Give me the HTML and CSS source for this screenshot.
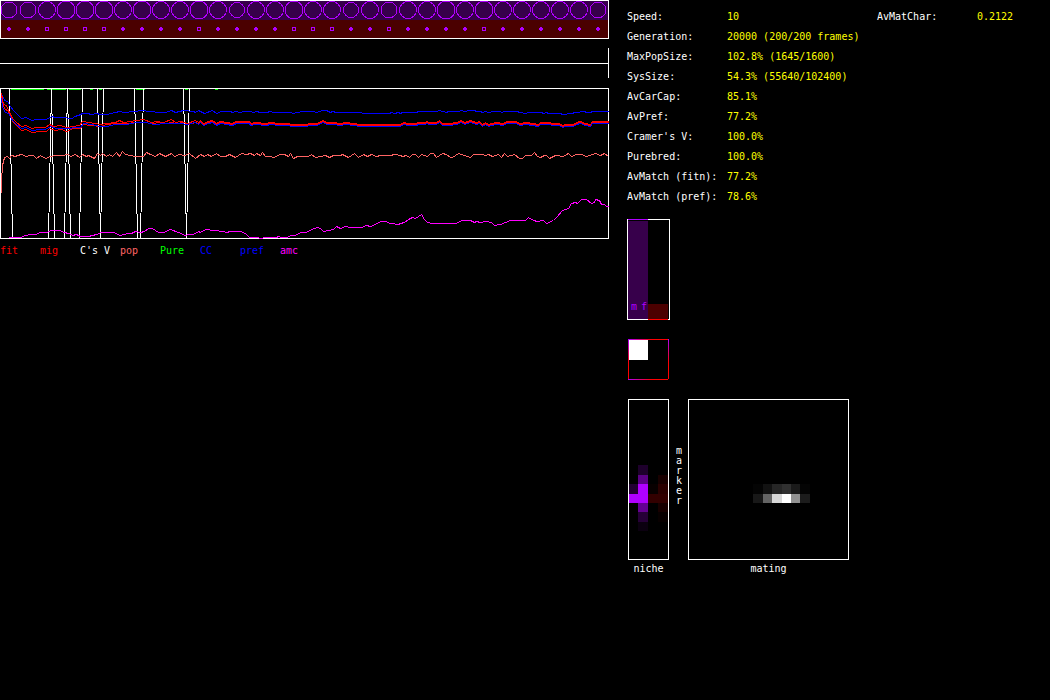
FILE: index.html
```
<!DOCTYPE html>
<html lang="en">
<head>
<meta charset="utf-8">
<title>Population simulation</title>
<link rel="stylesheet" href="styles.css">
</head>
<body>
<main class="app">
  <section class="world">
    <svg class="plot" id="habitat" viewBox="0 0 609 39" role="img" aria-label="Habitat cells">
      <rect class="niche-a" x="1" y="1" width="607" height="19"/>
      <rect class="niche-b" x="1" y="20" width="607" height="18"/>
      <g id="cells"></g>
      <rect class="frame" x="0.5" y="0.5" width="608" height="38"/>
    </svg>
    <svg class="plot plot-gap" viewBox="0 0 609 30" role="img" aria-label="Migration">
      <path class="frame" d="M0 15.5H608M608.5 0V30"/>
    </svg>
    <svg class="plot plot-gap" viewBox="0 0 609 151" role="img" aria-label="History of statistics">
      <rect class="frame" x="0.5" y="0.5" width="608" height="150"/>
      <path class="line pure" d="M11 1.5H44M47 1.5H66M69 1.5H81M90 1.5H93M99 1.5H102M136 1.5H145M185 1.5H188M215 1.5H218"/>
      <path class="line cramer" d="M9.5 0.5L12.5 150.5M48.5 150.5L51.5 0.5L54.5 150.5M64.5 150.5L67.5 0.5L70.5 150.5M79.5 150.5L82.5 0.5M97.5 0.5L100.5 150.5L103.5 0.5M134.5 0.5L137.5 150.5M140.5 150.5L143.5 0.5M183.5 0.5L186.5 150.5L189.5 0.5"/>
      <g id="history"></g>
    </svg>
    <ul class="legend">
      <li class="c-fit">fit</li><li class="c-fit">mig</li><li class="c-cramer">C's V</li><li class="c-pop">pop</li><li class="c-pure">Pure</li><li class="c-cap">CC</li><li class="c-cap">pref</li><li class="c-amc">amc</li>
    </ul>
  </section>
  <section class="side">
    <div class="stats">
      <dl class="stat-list">
        <dt>Speed:</dt><dd>10</dd>
        <dt>Generation:</dt><dd>20000 (200/200 frames)</dd>
        <dt>MaxPopSize:</dt><dd>102.8% (1645/1600)</dd>
        <dt>SysSize:</dt><dd>54.3% (55640/102400)</dd>
        <dt>AvCarCap:</dt><dd>85.1%</dd>
        <dt>AvPref:</dt><dd>77.2%</dd>
        <dt>Cramer's V:</dt><dd>100.0%</dd>
        <dt>Purebred:</dt><dd>100.0%</dd>
        <dt>AvMatch (fitn):</dt><dd>77.2%</dd>
        <dt>AvMatch (pref):</dt><dd>78.6%</dd>
      </dl>
      <dl class="stat-list">
        <dt>AvMatChar:</dt><dd>0.2122</dd>
      </dl>
    </div>
    <svg class="bars" width="43" height="101" viewBox="0 0 43 101" role="img" aria-label="Niche occupancy">
      <rect class="frame" x="0.5" y="0.5" width="42" height="100"/>
      <rect class="niche-a" x="1" y="2" width="20" height="98"/>
      <rect class="niche-b" x="21" y="85" width="20" height="15"/>
      <path class="line purple" d="M1 0.5H21"/>
      <path class="line fit" d="M21 100.5H41"/>
      <text class="bar-label" x="4" y="91">m</text>
      <text class="bar-label" x="14" y="91">f</text>
    </svg>
    <svg class="matrix" width="41" height="41" viewBox="0 0 41 41" role="img" aria-label="Niche association">
      <defs>
        <linearGradient id="fade-x"><stop offset="0" stop-color="#b000ff"/><stop offset="0.6" stop-color="#ff0000"/></linearGradient>
        <linearGradient id="fade-y" x1="0" y1="0" x2="0" y2="1"><stop offset="0" stop-color="#b000ff"/><stop offset="0.6" stop-color="#ff0000"/></linearGradient>
      </defs>
      <rect fill="url(#fade-x)" x="0" y="0" width="41" height="1"/>
      <rect fill="url(#fade-y)" x="0" y="0" width="1" height="41"/>
      <rect fill="url(#fade-x)" x="0" y="40" width="40" height="1"/>
      <rect fill="url(#fade-y)" x="40" y="0" width="1" height="40"/>
      <rect fill="#fff" x="1" y="1" width="19" height="20"/>
    </svg>
    <div class="maps">
      <figure>
        <svg width="41" height="161" viewBox="0 0 41 161" role="img" aria-label="Niche by marker">
          <g id="niche-map"></g>
          <rect class="frame" x="0.5" y="0.5" width="40" height="160"/>
        </svg>
        <figcaption>niche</figcaption>
      </figure>
      <p class="axis">marker</p>
      <figure>
        <svg width="161" height="161" viewBox="0 0 161 161" role="img" aria-label="Mating by marker">
          <g id="mating-map"></g>
          <rect class="frame" x="0.5" y="0.5" width="160" height="160"/>
        </svg>
        <figcaption>mating</figcaption>
      </figure>
    </div>
  </section>
</main>
<script src="app.js"></script>
</body>
</html>
```
FILE: styles.css
```
* { box-sizing: border-box; }
body {
  margin: 0;
  background: #000;
  color: #fff;
  font: 10px/20px "DejaVu Sans Mono", "Liberation Mono", monospace;
}
.app {
  display: grid;
  grid-template-columns: 609fr 441fr;
  min-height: 100vh;
}
svg { display: block; shape-rendering: crispEdges; }
dl, dd, ul, figure, p { margin: 0; padding: 0; }
.plot { width: 100%; height: auto; }
.plot-gap { margin-top: 10px; }
.plot:first-child { margin-bottom: 9px; }
.plot:first-child + .plot-gap { margin-top: 0; }
.frame { fill: none; stroke: #fff; }
.niche-a { fill: #37004b; }
.niche-b { fill: #4b0000; }
.cell { fill: none; stroke: #b000ff; }
.mark { fill: #b000ff; }
.line { fill: none; stroke-width: 1; }
.purple { stroke: #b000ff; }
.fit { stroke: #f00; }
.pure { stroke: #0f0; }
.cramer { stroke: #fff; }
.pop { stroke: #ff6464; }
.cap { stroke: #00f; }
.amc { stroke: #f0f; }
.legend {
  display: flex;
  margin-top: 2px;
  list-style: none;
}
.legend li { width: 40px; white-space: nowrap; }
.c-fit { color: #f00; }
.c-cramer { color: #fff; }
.c-pop { color: #ff6464; }
.c-pure { color: #0f0; }
.c-cap { color: #00f; }
.c-amc { color: #f0f; }
.side { padding: 7px 0 0 18px; }
.stats { display: flex; }
.stat-list {
  display: grid;
  grid-template-columns: 100px 150px;
  align-content: start;
  white-space: nowrap;
}
.stat-list:last-child { grid-template-columns: 100px auto; }
.stat-list dd { color: #ff0; }
.bars { margin-top: 12px; }
.bar-label { fill: #b000ff; font-size: 10px; }
.matrix { margin: 19px 0 0 1px; }
.maps {
  display: flex;
  margin: 19px 0 0 1px;
}
.maps figcaption { line-height: 18px; text-align: center; }
/* One letter per line, reading downwards. */
.axis {
  width: 19px;
  padding: 47px 6px 0 7px;
  line-height: 10px;
  word-break: break-all;
}
```
FILE: app.js
```
const NS = "http://www.w3.org/2000/svg";

function add(parent, name, attrs) {
  const node = document.createElementNS(NS, name);
  for (const key in attrs) node.setAttribute(key, attrs[key]);
  parent.appendChild(node);
}

// Habitat: one patch every 19 units, ring size shows the niche A population.
const radii = [8, 8, 8.5, 9, 9, 9, 8.5, 9, 8.5, 8.5, 9, 8.5, 7.5, 8.5, 8.5, 9,
  8.5, 8.5, 7.5, 8.5, 8, 8.5, 8.5, 9, 8.5, 9, 8.5, 8.5, 8.5, 8.5, 8.5, 8];
const hollow = [2, 3, 4, 5, 10, 15, 16, 17, 20, 25];
const cells = document.getElementById("cells");
radii.forEach((r, i) => {
  const x = i * 19;
  add(cells, "circle", { class: "cell", cx: x + 9, cy: 10, r: r });
  if (hollow.includes(i)) {
    add(cells, "rect", { class: "cell", x: x + 7.5, y: 27.5, width: 3, height: 3 });
  } else {
    add(cells, "path", { class: "mark", d: `M${x + 8} 27h2v1h1v2h-1v1h-2v-1h-1v-2h1z` });
  }
});

// History samples: three sample units per plot unit, three blocks of 600 units.
const STEP = 3;
const OFFSET = 4;
const cap = [
  "3,28 12,48 22,53 30,68 40,80 52,92 64,104 80,99 95,108 110,106 135,106 145,102 155,98 165,101 195,101 205,104 218,104 222,98 235,95 247,87 262,88 275,92 290,88 300,92 320,90 345,86 358,82 372,84 400,82 430,80 445,82 480,86 495,84 513,80 527,84 550,80 580,82 585,85 595,80",
  "0,83 12,88 38,79 50,88 65,82 90,82 97,86 105,82 120,86 130,82 150,82 160,86 170,82 180,85 200,85 210,82 220,85 270,85 280,88 290,85 310,83 340,83 350,86 358,82 368,78 380,79 390,85 398,82 408,85 480,86 490,88 568,88 575,85 583,88 595,85",
  "0,88 8,85 50,85 54,82 110,82 118,79 138,85 145,82 175,82 184,79 194,82 208,79 222,79 228,82 240,82 248,85 256,82 266,85 280,82 300,82 304,85 312,82 352,82 358,85 375,87 384,85 425,85 430,88 438,85 446,88 480,88 486,91 500,91 502,88 518,88 524,85 538,85 540,82 554,82 560,85 572,85 576,82 624,82"
];
const fitLate = "0,110 10,118 25,112 38,109 50,118 60,112 80,116 97,119 110,112 130,112 148,113 152,118 165,115 200,118 210,115 235,118 300,121 350,118 370,110 380,116 400,115 420,118 440,116 480,121 540,122 580,121";
const fitEnd = "0,122 10,116 25,119 50,118 55,115 75,115 80,112 88,115 108,115 118,110 128,118 150,118 170,115 184,109 194,115 210,109 220,113 228,116 238,112 246,121 256,116 264,122 285,116 310,118 318,112 350,112 357,118 378,116 415,120 420,115 450,115 455,119 478,119 488,125 495,121 520,122 530,116 542,112 555,118 570,120 576,113 624,112";
const fit = [
  "3,28 10,62 20,64 28,84 38,104 50,116 64,128 80,124 95,133 110,130 135,131 148,122 160,128 180,125 200,130 220,126 238,124 247,113 265,116 285,118 300,122 320,118 345,116 357,110 370,116 390,113 410,109 430,107 455,115 470,112 490,116 513,107 525,115 545,112 563,118 585,110 595,114",
  fitLate, fitEnd
];
const mig = [
  "3,36 6,56 12,72 25,82 38,112 50,124 65,138 80,135 95,145 120,142 138,143 148,134 165,140 185,135 200,142 220,134 240,132 247,122 270,125 300,127 320,122 350,117 380,119 410,114 430,114 455,119 480,115 500,119 515,114 530,119 550,116 565,121 585,114 595,118",
  fitLate, fitEnd
];
const pref = [
  "3,44 6,66 14,82 28,92 38,110 50,122 64,132 80,130 95,139 120,136 135,136 150,128 170,132 205,134 225,130 240,129 250,118 275,122 300,128 320,126 345,120 380,121 410,116 440,116 460,120 500,118 540,118 560,122 585,116 595,120",
  fitLate, fitEnd
];
const pop = [
  "3,324 5,290 8,245 12,220 22,218 27,222 35,215 45,218 52,215 65,211 78,216 88,213 100,214 110,223 122,214 137,222 150,217 170,215 185,213 205,211 212,216 225,212 238,220 248,212 258,217 265,213 282,223 292,209 300,214 306,208 318,218 327,212 338,217 350,206 359,216 367,203 376,211 405,216 430,218 438,206 452,211 465,218 478,209 495,217 513,209 522,216 538,211 552,215 568,209 585,222",
  "0,211 12,216 22,211 33,217 50,209 60,217 75,217 89,212 105,220 124,209 140,211 150,208 162,214 170,209 180,213 188,205 197,216 210,217 220,220 240,211 254,211 264,217 271,208 280,222 292,217 325,217 335,211 345,220 360,218 376,214 388,219 400,214 420,214 427,211 445,220 462,208 474,220 490,212 503,216 515,211 528,217 540,214 570,215 582,211",
  "0,214 8,218 18,214 28,220 37,211 46,211 55,220 65,211 82,218 92,208 101,208 110,220 128,208 138,211 150,220 158,219 174,208 212,220 220,211 248,211 256,215 264,211 278,218 294,211 305,220 313,208 322,217 342,211 358,222 368,223 377,214 395,214 404,205 412,216 420,220 432,214 440,214 448,222 465,214 490,217 505,208 514,217 528,211 545,211 560,218 585,208 602,215 613,209 624,217"
];
const amc = [
  "24,460 35,459 45,461 60,460 75,454 90,450 105,451 120,445 140,444 155,440 180,439 190,445 207,447 217,454 230,450 240,457 265,457 290,451 305,446 340,446 362,454 382,447 395,448 405,441 422,445 433,443 446,433 458,433 475,444 490,444 510,436 535,446 555,453 565,450 580,451 595,442",
  "0,445 15,436 40,440 70,443 80,446 90,442 122,443 135,448 148,460 172,460 180,462 195,460 230,460 235,457 243,460 262,460 272,454 285,454 300,446 320,444 335,435 352,430 362,434 371,442 385,439 400,436 409,428 420,433 436,427 450,430 485,430 498,425 510,427 525,422 542,412 555,412 570,418 595,421",
  "0,418 12,414 25,405 38,400 46,403 65,391 72,405 82,414 98,418 170,418 185,409 210,409 222,415 230,412 240,415 256,412 275,416 284,424 300,421 330,409 376,409 385,401 400,409 412,412 430,409 440,418 460,409 470,401 487,378 505,373 513,359 525,355 532,358 545,347 560,347 575,358 582,355 587,346 597,350 604,361 614,362 620,367 624,367"
];

const chart = document.getElementById("history");
function drawSeries(blocks, name, shift) {
  const points = [];
  blocks.forEach((block, b) => {
    block.split(" ").forEach(pair => {
      const [x, y] = pair.split(",").map(Number);
      const drop = b > 0 ? shift : 0;
      points.push(`${Math.floor((x + b * 600) / STEP) + 0.5},${Math.floor(y / STEP) - OFFSET + drop + 0.5}`);
    });
  });
  add(chart, "polyline", { class: "line " + name, points: points.join(" ") });
}
drawSeries(amc, "amc", 0);
drawSeries(pop, "pop", 0);
drawSeries(cap, "cap", 0);
drawSeries(mig, "fit", 1);
drawSeries(pref, "cap", 2);
drawSeries(fit, "fit", 0);

// Density maps: [x, y, width, height, colour].
function drawMap(id, blocks) {
  const map = document.getElementById(id);
  blocks.forEach(([x, y, width, height, fill]) => add(map, "rect", { x, y, width, height, fill }));
}
drawMap("niche-map", [
  [10, 66, 10, 10, "#1e002c"], [10, 76, 10, 9, "#5c0086"], [10, 85, 10, 19, "#b000ff"],
  [10, 104, 10, 9, "#640092"], [10, 113, 10, 10, "#260038"], [10, 123, 10, 9, "#0b0010"],
  [1, 85, 9, 10, "#220032"], [1, 95, 9, 9, "#b000ff"],
  [20, 85, 10, 10, "#080000"], [20, 95, 20, 9, "#320000"],
  [30, 76, 10, 9, "#180000"], [30, 85, 10, 10, "#2a0000"],
  [30, 104, 10, 9, "#180000"], [30, 113, 10, 10, "#080000"]
]);
drawMap("mating-map", [
  [65, 85, 10, 10, "#040404"], [75, 85, 9, 10, "#121212"], [84, 85, 10, 10, "#262626"],
  [94, 85, 9, 10, "#303030"], [103, 85, 9, 10, "#1a1a1a"], [112, 85, 10, 10, "#040404"],
  [65, 95, 10, 9, "#181818"], [75, 95, 9, 9, "#646464"], [84, 95, 10, 9, "#d7d7d7"],
  [94, 95, 9, 9, "#fff"], [103, 95, 9, 9, "#919191"], [112, 95, 10, 9, "#1c1c1c"]
]);
```
